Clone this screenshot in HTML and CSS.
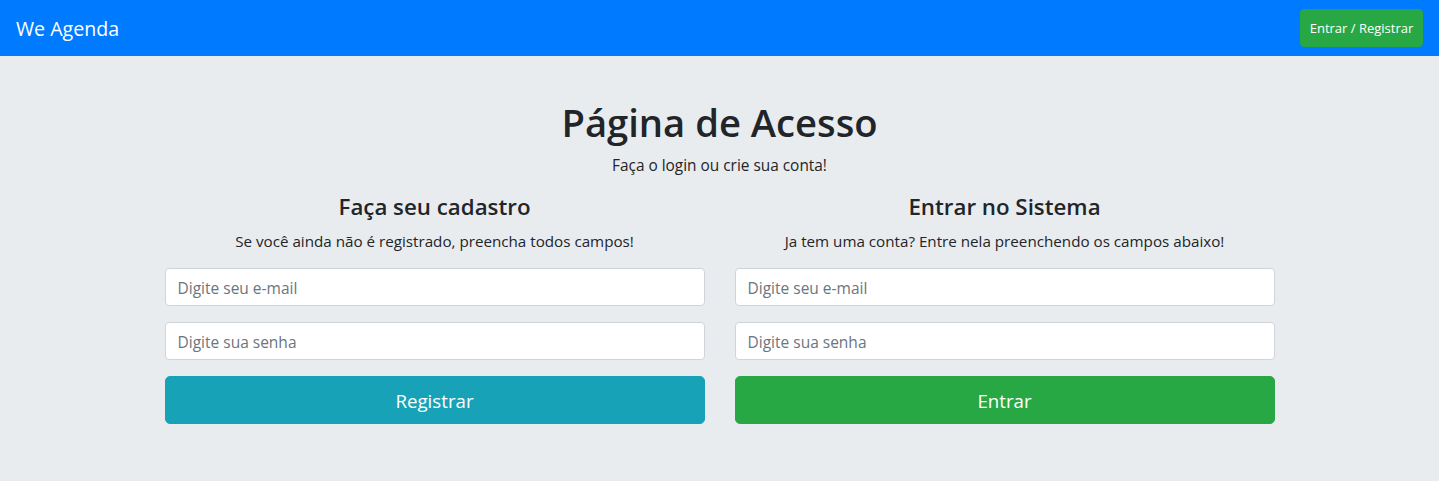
FILE: index.html
```html
<!DOCTYPE html>
<html lang="pt-BR">
<head>
<meta charset="utf-8">
<title>We Agenda</title>
<link rel="stylesheet" href="styles.css">
</head>
<body>
<nav class="navbar">
  <a class="brand" href="#">We Agenda</a>
  <button class="btn btn-nav" type="button">Entrar / Registrar</button>
</nav>
<main class="jumbotron">
  <div class="container">
    <h1 class="title">Página de Acesso</h1>
    <p class="lead">Faça o login ou crie sua conta!</p>
    <div class="row">
      <form class="col">
        <h3 class="col-title">Faça seu cadastro</h3>
        <p class="col-text">Se você ainda não é registrado, preencha todos campos!</p>
        <div class="form-group"><input class="form-control" type="email" placeholder="Digite seu e-mail"></div>
        <div class="form-group"><input class="form-control" type="password" placeholder="Digite sua senha"></div>
        <button class="btn btn-lg btn-info" type="button">Registrar</button>
      </form>
      <form class="col">
        <h3 class="col-title">Entrar no Sistema</h3>
        <p class="col-text">Ja tem uma conta? Entre nela preenchendo os campos abaixo!</p>
        <div class="form-group"><input class="form-control" type="email" placeholder="Digite seu e-mail"></div>
        <div class="form-group"><input class="form-control" type="password" placeholder="Digite sua senha"></div>
        <button class="btn btn-lg btn-success" type="button">Entrar</button>
      </form>
    </div>
  </div>
</main>
</body>
</html>
```
FILE: styles.css
```css
* { box-sizing: border-box; }
html, body { margin: 0; padding: 0; }
body {
  font-family: "Open Sans", "Noto Sans", "Liberation Sans", sans-serif;
  font-size: 16px;
  line-height: 1.5;
  color: #212529;
  background: #e9ecef;
  min-height: 481px;
}
.navbar {
  height: 56px;
  background: #007bff;
  display: flex;
  align-items: center;
  justify-content: space-between;
  padding: 0 16px;
}
.brand {
  color: #fff;
  text-decoration: none;
  font-size: 19.6px;
  line-height: 30px;
  padding-top: 2px;
}
.btn {
  font-family: inherit;
  border: 1px solid transparent;
  color: #fff;
  cursor: pointer;
  border-radius: 4px;
}
.btn-nav {
  background: #28a745;
  border-color: #28a745;
  font-size: 13px;
  height: 38px;
  width: 123px;
  padding: 0;
}
.jumbotron {
  padding: 42px 0 40px;
}
.container {
  width: 1140px;
  margin: 0 auto;
  text-align: center;
}
.title {
  font-size: 38.2px;
  font-weight: 600;
  line-height: 48px;
  margin: 0 0 8px;
}
.lead {
  font-size: 15.4px;
  line-height: 24px;
  margin: 0 0 12px;
}
.row {
  display: grid;
  grid-template-columns: 1fr 1fr;
}
.col {
  padding: 0 15px;
  margin: 0;
}
.col-title {
  font-size: 22.3px;
  font-weight: 600;
  line-height: 34px;
  margin: 0 0 5px;
}
.col-text {
  font-size: 15.2px;
  line-height: 24px;
  margin: 0 0 15px;
}
.form-group { margin-bottom: 16px; }
.form-control {
  display: block;
  width: 100%;
  height: 38px;
  padding: 7px 12px 5px;
  font-family: inherit;
  font-size: 15.5px;
  color: #495057;
  background: #fff;
  border: 1px solid #ced4da;
  border-radius: 4px;
  outline: none;
}
.form-control::placeholder { color: #6c757d; opacity: 1; }
.btn-lg {
  display: block;
  width: 100%;
  height: 48px;
  font-size: 18.7px;
  border-radius: 5px;
}
.btn-info { background: #17a2b8; border-color: #17a2b8; }
.btn-success { background: #28a745; border-color: #28a745; }
```
